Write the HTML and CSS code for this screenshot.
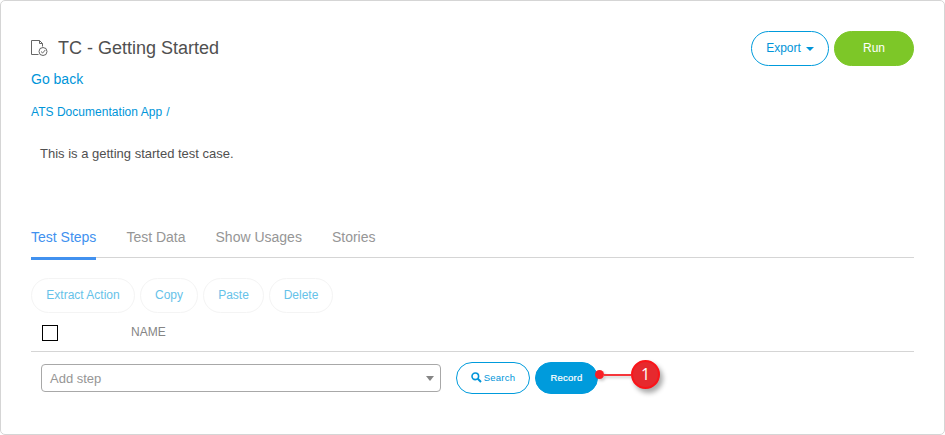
FILE: index.html
```html
<!DOCTYPE html>
<html lang="en">
<head>
<meta charset="utf-8">
<title>TC - Getting Started</title>
<link rel="stylesheet" href="styles.css">
</head>
<body>
<main class="card">
  <header class="header">
    <svg class="doc-icon" width="18" height="18" viewBox="0 0 18 18" fill="none" stroke="#666" stroke-width="1">
      <path d="M7.500 15.500H.5V1.500H8.500L11.500 4.500V7.500"/>
      <path d="M8.500 1.500V4.500H11.500"/>
      <circle cx="12" cy="12.500" r="4"/>
      <path d="M10 12.500l1.600 1.500 2.700-3"/>
    </svg>
    <h1 class="title">TC - Getting Started</h1>
    <button class="btn export">Export <span class="caret"></span></button>
    <button class="btn run">Run</button>
  </header>
  <a class="back">Go back</a>
  <nav class="crumbs"><a>ATS Documentation App</a><span>/</span></nav>
  <p class="description">This is a getting started test case.</p>
  <nav class="tabs">
    <a class="tab active">Test Steps</a>
    <a class="tab">Test Data</a>
    <a class="tab">Show Usages</a>
    <a class="tab">Stories</a>
  </nav>
  <div class="actions">
    <button class="btn faded extract">Extract Action</button>
    <button class="btn faded copy">Copy</button>
    <button class="btn faded paste">Paste</button>
    <button class="btn faded delete">Delete</button>
  </div>
  <div class="table-head">
    <span class="checkbox"></span>
    <span class="column-name">NAME</span>
  </div>
  <div class="add-row">
    <div class="select"><span>Add step</span><span class="arrow"></span></div>
    <button class="btn small search">
      <svg class="lens" width="11" height="11" viewBox="0 0 11 11" fill="none" stroke="currentColor">
        <circle cx="4.300" cy="4.300" r="3.300" stroke-width="1.600"/>
        <path d="M6.800 6.800L10 10" stroke-width="2"/>
      </svg>
      <span>Search</span>
    </button>
    <div class="record-wrap">
      <button class="btn small record">Record</button>
      <div class="callout"><span class="dot"></span><span class="line"></span><span class="number">1</span></div>
    </div>
  </div>
</main>
</body>
</html>
```
FILE: styles.css
```css
* { box-sizing: border-box; }
body {
  margin: 0;
  background: #fff;
  color: #505050;
  font-family: "Liberation Sans", Arial, sans-serif;
}
.card {
  height: 435px;
  padding: 30px;
  border: 1px solid #d5d5d5;
  border-radius: 5px;
}
.header { display: flex; height: 35px; align-items: center; }
.doc-icon { flex: none; margin: 0 9px 1px 0; }
.title { margin: 0 auto 2px 0; font-size: 18px; font-weight: 400; line-height: 20px; }
.btn {
  display: flex;
  flex: none;
  align-items: center;
  justify-content: center;
  height: 35px;
  padding: 0 0 1px;
  border: 1px solid #009bdc;
  border-radius: 18px;
  background: #fff;
  color: #0095d9;
  font: 12px "Liberation Sans", Arial, sans-serif;
  white-space: nowrap;
}
.export { width: 78px; margin-right: 5px; }
.caret {
  margin: 2px 0 0 5px;
  border: 4px solid transparent;
  border-top-color: #0095d9;
  border-bottom: 0;
}
.run { width: 80px; border-color: #7dc728; background: #7dc728; color: #fff; }
.back { display: block; height: 18px; margin-top: 4px; color: #0095d9; font-size: 14px; line-height: 18px; }
.crumbs { display: flex; gap: 4px; height: 16px; margin-top: 16px; color: #0095d9; font-size: 12px; line-height: 16px; letter-spacing: .03px; }
.description { height: 16px; margin: 26px 0 0 9px; font-size: 13px; line-height: 16px; }
.tabs {
  display: flex;
  height: 30px;
  margin-top: 66px;
  border-bottom: 1px solid #d5d5d5;
  color: #969696;
  font-size: 14px;
  line-height: 18px;
}
.tab { margin-right: 30px; white-space: nowrap; }
.active { height: 32px; border-bottom: 3px solid #4191ef; color: #4191ef; }
.actions { display: flex; gap: 5px; margin-top: 20px; }
.faded { border-color: #f4f4f4; color: #66c2e9; }
.extract { width: 104px; }
.copy { width: 58px; }
.paste { width: 61px; }
.delete { width: 64px; }
.table-head {
  display: flex;
  height: 39px;
  padding: 12px 0 0 11px;
  border-bottom: 1px solid #d5d5d5;
}
.checkbox { width: 16px; height: 16px; border: 1px solid #000; }
.column-name { margin: -1px 0 0 73px; color: #858585; font-size: 12px; line-height: 16px; }
.add-row { display: flex; align-items: center; height: 32px; margin: 10px 0 0 10px; }
.select {
  display: flex;
  align-items: center;
  justify-content: space-between;
  width: 400px;
  height: 28px;
  margin-right: 15px;
  padding: 0 6px 0 8px;
  border: 1px solid #a8a8a8;
  border-radius: 4px;
  color: #969696;
  font-size: 13px;
}
.arrow { border: 4px solid transparent; border-top: 5px solid #858585; border-bottom: 0; }
.small { height: 32px; font-size: 9.5px; letter-spacing: .25px; }
.search { width: 74px; margin-right: 5px; }
.lens { margin: -1px 2px 0 0; }
.record-wrap { position: relative; }
.record { width: 63px; border-color: #009bdc; background: #009bdc; color: #fff; -webkit-text-stroke: .2px #fff; }
.callout { position: absolute; top: -2px; left: 60px; display: flex; align-items: center; }
.dot { width: 9px; height: 9px; border-radius: 50%; background: #f91e24; box-shadow: 2px 2px 3px #0003; }
.line { width: 27px; height: 2px; background: #f5363b; box-shadow: 2px 2px 3px #0003; }
.number {
  width: 29px;
  height: 29px;
  border: 2px solid #fa1419;
  border-radius: 50%;
  background: #e6292e;
  box-shadow: 3px 4px 5px #0005;
  color: #fff;
  font: 16px/24px "Open Sans", sans-serif;
  text-align: center;
}
```
